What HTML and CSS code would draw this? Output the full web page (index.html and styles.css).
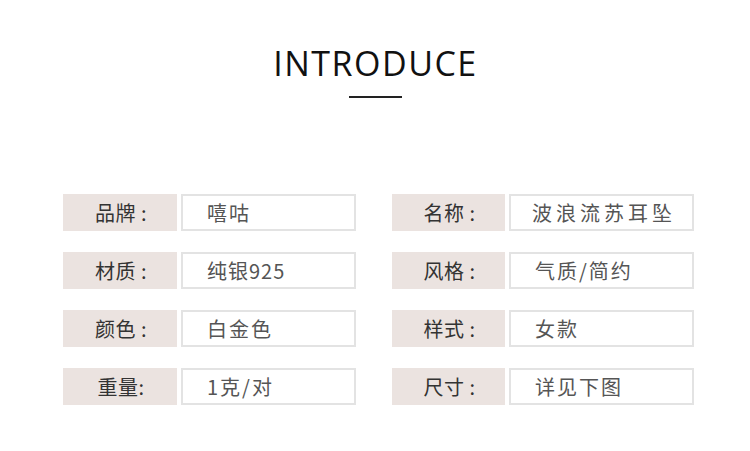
FILE: index.html
```html
<!DOCTYPE html>
<html lang="zh">
<head>
<meta charset="utf-8">
<link rel="stylesheet" href="styles.css">
</head>
<body>
<div class="page">
  <header class="head">
    <h1 class="title">INTRODUCE</h1>
    <div class="rule"></div>
  </header>
  <div class="grid">
    <div class="item left"><div class="label">品牌 :</div><div class="value">嘻咕</div></div>
    <div class="item right"><div class="label">名称 :</div><div class="value wide">波浪流苏耳坠</div></div>
    <div class="item left"><div class="label">材质 :</div><div class="value tight">纯银925</div></div>
    <div class="item right"><div class="label">风格 :</div><div class="value">气质/简约</div></div>
    <div class="item left"><div class="label">颜色 :</div><div class="value">白金色</div></div>
    <div class="item right"><div class="label">样式 :</div><div class="value">女款</div></div>
    <div class="item left"><div class="label">重量:</div><div class="value">1克/对</div></div>
    <div class="item right"><div class="label">尺寸 :</div><div class="value">详见下图</div></div>
  </div>
</div>
</body>
</html>
```
FILE: styles.css
```css
html, body {
  margin: 0;
  padding: 0;
  background: #ffffff;
}
.page {
  width: 750px;
  height: 451px;
  font-family: "Noto Sans CJK SC", "Noto Sans", sans-serif;
}
.head {
  display: flex;
  flex-direction: column;
  align-items: center;
  padding-top: 46px;
}
.title {
  margin: 0;
  font-family: "Open Sans", sans-serif;
  font-weight: 400;
  font-size: 34px;
  line-height: 34px;
  letter-spacing: 1.5px;
  color: #111;
  padding-left: 1px;
}
.rule {
  width: 53px;
  height: 2px;
  background: #222;
  margin-top: 16px;
}
.grid {
  display: grid;
  grid-template-columns: 293px 302px;
  column-gap: 36px;
  row-gap: 21px;
  padding-left: 63px;
  margin-top: 96px;
}
.item {
  display: flex;
  gap: 4px;
  height: 37px;
}
.label {
  width: 114px;
  flex: none;
  background: #ebe3e0;
  color: #333;
  font-size: 20px;
  line-height: 37px;
  text-align: center;
  letter-spacing: 0.5px;
  padding-left: 2px;
  box-sizing: border-box;
}
.value {
  flex: 1;
  box-sizing: border-box;
  border: 2px solid #e3e3e3;
  color: #555;
  font-size: 20px;
  line-height: 33px;
  padding-left: 24px;
  letter-spacing: 2px;
}
.value.wide {
  padding-left: 21px;
  letter-spacing: 4px;
}
.value.tight {
  letter-spacing: 1px;
}
.right .label {
  width: 113px;
}
```
